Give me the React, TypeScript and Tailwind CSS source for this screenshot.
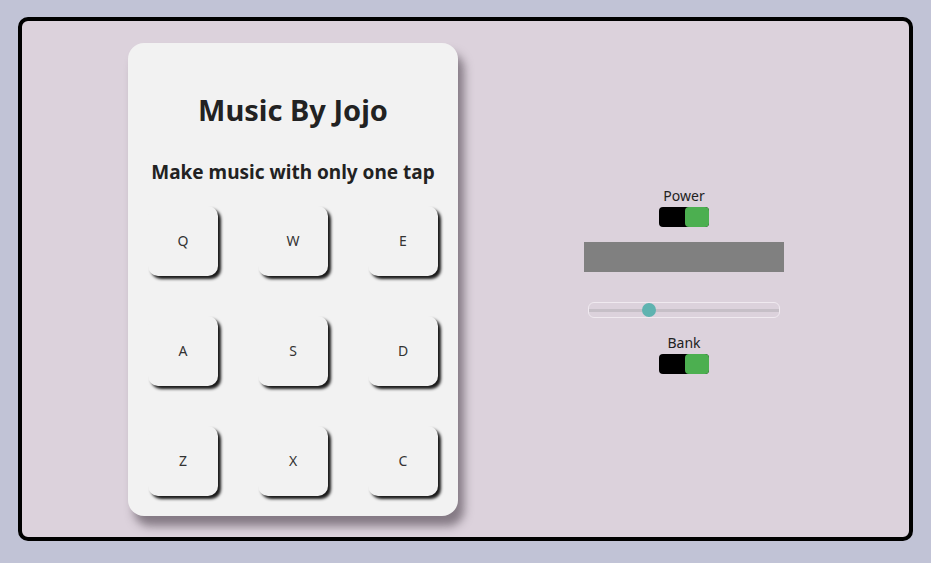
import React from "react";

const keys = ["Q", "W", "E", "A", "S", "D", "Z", "X", "C"];

function Toggle() {
  return (
    <div className="mt-[2px] flex h-[20px] w-[50px] rounded-[4px] bg-black">
      <div className="ml-auto h-[20px] w-[24px] rounded-[4px] bg-[#4caf50]" />
    </div>
  );
}

export default function App() {
  return (
    <div
      className="h-[563px] w-[931px] bg-[#c1c3d6] pt-[17px] px-[18px]"
      style={{ fontFamily: '"Noto Sans", "Open Sans", sans-serif' }}
    >
      <div className="flex h-[524px] items-center rounded-[10px] border-4 border-black bg-[#dcd2dc] pl-[106px]">
        <div className="flex h-[473px] w-[330px] flex-col items-center rounded-[16px] bg-[#f2f2f2] shadow-[6px_10px_10px_rgba(60,50,60,0.55)]">
          <h1 className="mt-[49px] text-[29px] font-bold leading-[36px] text-[#222]">Music By Jojo</h1>
          <p className="mt-[31px] text-[19px] font-bold leading-[26px] text-[#222]">Make music with only one tap</p>
          <div className="mt-[21px] grid grid-cols-3 gap-x-[40px] gap-y-[40px]">
            {keys.map((k) => (
              <div
                key={k}
                className="flex h-[70px] w-[70px] items-center justify-center rounded-[10px] bg-[#f2f2f2] text-[14px] text-[#333] shadow-[3px_3px_3px_rgba(0,0,0,0.9)]"
              >
                {k}
              </div>
            ))}
          </div>
        </div>
        <div className="ml-[126px] mt-[166px] flex w-[200px] flex-col items-center self-start">
          <div className="text-[14px] leading-[18px] text-[#222]">Power</div>
          <Toggle />
          <div className="mt-[15px] h-[30px] w-[200px] bg-[#808080]" />
          <div className="relative mt-[30px] h-[16px] w-[192px] rounded-[6px] border border-[#f0eaf0]">
            <div className="absolute left-0 right-0 top-[6px] h-[3px] bg-[#c6bfc7]" />
            <div className="absolute left-[53px] top-[0px] h-[14px] w-[14px] rounded-full bg-[#5fb3b0]" />
          </div>
          <div className="mt-[16px] text-[14px] leading-[18px] text-[#222]">Bank</div>
          <Toggle />
        </div>
      </div>
    </div>
  );
}
